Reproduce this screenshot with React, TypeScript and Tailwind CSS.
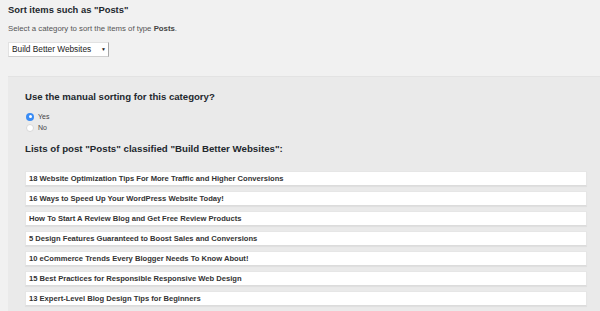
import React from "react";

const items = [
  "18 Website Optimization Tips For More Traffic and Higher Conversions",
  "16 Ways to Speed Up Your WordPress Website Today!",
  "How To Start A Review Blog and Get Free Review Products",
  "5 Design Features Guaranteed to Boost Sales and Conversions",
  "10 eCommerce Trends Every Blogger Needs To Know About!",
  "15 Best Practices for Responsible Responsive Web Design",
  "13 Expert-Level Blog Design Tips for Beginners",
];

export default function App() {
  return (
    <div
      className="w-[600px] h-[311px] overflow-hidden bg-[#f1f1f1] text-[#23282d]"
      style={{ fontFamily: '"Liberation Sans", Arial, sans-serif' }}
    >
      <div className="px-2">
        <div className="h-[19px] leading-[19px] text-[9.4px] font-bold">Sort items such as "Posts"</div>
        <div className="mt-[3px] h-[14px] leading-[14px] text-[7.8px] text-[#555]">
          Select a category to sort the items of type <span className="font-bold text-[#444]">Posts</span>.
        </div>
        <div className="mt-[6px] flex h-[15px] w-[101px] items-center bg-white border border-[#e2e2e2] border-r-[#a8a8a8] border-b-[#cfcfcf]">
          <span className="pl-[3px] text-[8.3px] leading-none text-[#222]">Build Better Websites</span>
          <span className="ml-auto mr-[2px] text-[5px] leading-none text-[#222]">▼</span>
        </div>
      </div>
      <div className="ml-2 mt-[19px] h-[240px] bg-[#eaeaea] border-t border-[#e3e3e3] pl-[17px] pr-[13px] pt-[13px]">
        <div className="h-[14px] leading-[14px] text-[9.6px] font-bold text-[#23282d]">
          Use the manual sorting for this category?
        </div>
        <div className="mt-[7px] flex h-[11px] items-center">
          <span className="ml-[1px] flex h-[8px] w-[8px] items-center justify-center rounded-full bg-[#3a8cf5]">
            <span className="h-[3px] w-[3px] rounded-full bg-white" />
          </span>
          <span className="ml-[4px] text-[7px] leading-none text-[#444]">Yes</span>
        </div>
        <div className="flex h-[11px] items-center">
          <span className="ml-[1px] h-[8px] w-[8px] rounded-full bg-white border border-[#d8d8d8]" />
          <span className="ml-[4px] text-[7px] leading-none text-[#444]">No</span>
        </div>
        <div className="mt-[9px] h-[14px] leading-[14px] text-[9.7px] font-bold text-[#23282d]">
          Lists of post "Posts" classified "Build Better Websites":
        </div>
        <div className="mt-[15px] flex flex-col gap-[5px]">
          {items.map((t) => (
            <div
              key={t}
              className="flex h-[15px] items-center bg-white border border-[#e6e6e6] border-b-[#dcdcdc] pl-[3px] text-[7.6px] font-bold text-[#333] shadow-[0_1px_1px_rgba(0,0,0,0.04)]"
            >
              {t}
            </div>
          ))}
        </div>
      </div>
    </div>
  );
}
